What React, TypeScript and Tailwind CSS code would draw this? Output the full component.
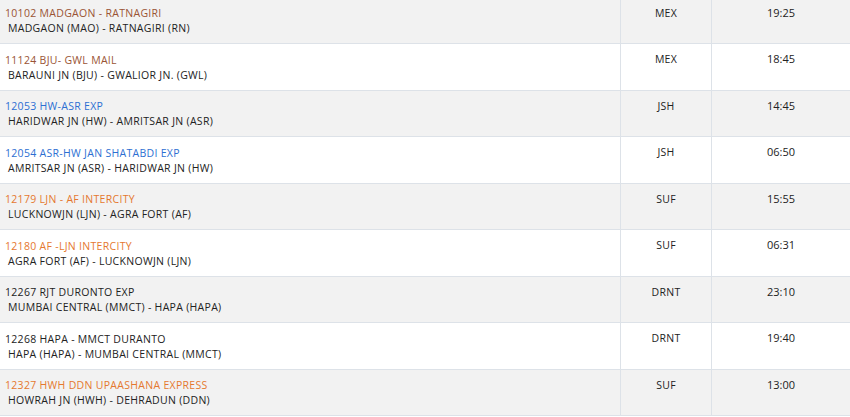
const trains = [
  { no: "10102", name: "MADGAON - RATNAGIRI", route: "MADGAON (MAO) - RATNAGIRI (RN)", type: "MEX", time: "19:25", color: "text-[#9a5434]" },
  { no: "11124", name: "BJU- GWL MAIL", route: "BARAUNI JN (BJU) - GWALIOR JN. (GWL)", type: "MEX", time: "18:45", color: "text-[#9a5434]" },
  { no: "12053", name: "HW-ASR EXP", route: "HARIDWAR JN (HW) - AMRITSAR JN (ASR)", type: "JSH", time: "14:45", color: "text-[#2d6fd2]" },
  { no: "12054", name: "ASR-HW JAN SHATABDI EXP", route: "AMRITSAR JN (ASR) - HARIDWAR JN (HW)", type: "JSH", time: "06:50", color: "text-[#2d6fd2]" },
  { no: "12179", name: "LJN - AF INTERCITY", route: "LUCKNOWJN (LJN) - AGRA FORT (AF)", type: "SUF", time: "15:55", color: "text-[#e5782f]" },
  { no: "12180", name: "AF -LJN INTERCITY", route: "AGRA FORT (AF) - LUCKNOWJN (LJN)", type: "SUF", time: "06:31", color: "text-[#e5782f]" },
  { no: "12267", name: "RJT DURONTO EXP", route: "MUMBAI CENTRAL (MMCT) - HAPA (HAPA)", type: "DRNT", time: "23:10", color: "text-[#222222]" },
  { no: "12268", name: "HAPA - MMCT DURANTO", route: "HAPA (HAPA) - MUMBAI CENTRAL (MMCT)", type: "DRNT", time: "19:40", color: "text-[#222222]" },
  { no: "12327", name: "HWH DDN UPAASHANA EXPRESS", route: "HOWRAH JN (HWH) - DEHRADUN (DDN)", type: "SUF", time: "13:00", color: "text-[#e5782f]" },
];

export default function App() {
  return (
    <div className="w-[850px] h-[417px] overflow-hidden bg-white font-['Open_Sans',sans-serif]">
      <div className="-mt-[2.5px]">
        {trains.map((t, i) => (
          <div
            key={t.no}
            className={`grid grid-cols-[621px_91px_1fr] h-[46.5px] border-b border-[#dde2e8] ${i % 2 === 0 ? "bg-[#f2f2f2]" : "bg-white"}`}
          >
            <div className="pl-[5px] pt-[8.5px] border-r border-[#dde2e8] tracking-[0.3px]">
              <div className={`text-[10.5px] leading-[14px] ${t.color}`}>
                {t.no} {t.name}
              </div>
              <div className="text-[10.5px] leading-[16px] text-[#222222] pl-[3px]">{t.route}</div>
            </div>
            <div className="pt-[8px] text-center text-[10.5px] leading-[14px] tracking-[0.3px] text-[#222222] border-r border-[#dde2e8]">
              {t.type}
            </div>
            <div className="pt-[8px] text-center text-[11px] leading-[14px] text-[#222222]">{t.time}</div>
          </div>
        ))}
      </div>
    </div>
  );
}
